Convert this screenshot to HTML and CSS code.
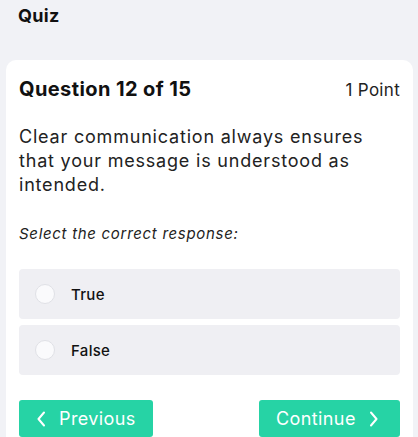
FILE: index.html
```html
<!DOCTYPE html>
<html lang="en">
<head>
    <meta charset="UTF-8">
    <meta name="viewport" content="width=device-width, initial-scale=1.0">
    <title>Quiz</title>
    <link rel="stylesheet" href="styles.css">
</head>
<body>
    <header class="top-bar">
        <h1>Quiz</h1>
    </header>
    <main class="card">
        <div class="card-head">
            <h2>Question 12 of 15</h2>
            <span class="points">1 Point</span>
        </div>
        <p class="question">Clear communication always ensures that your message is understood as intended.</p>
        <p class="hint">Select the correct response:</p>
        <div class="options">
            <label class="option">
                <input type="radio" name="answer" value="true">
                <span>True</span>
            </label>
            <label class="option">
                <input type="radio" name="answer" value="false">
                <span>False</span>
            </label>
        </div>
        <div class="actions">
            <button class="nav-button prev">
                <svg width="8" height="16" viewBox="0 0 8 16"><path d="M7 1.5 L1.5 8 L7 14.5" fill="none" stroke="#fff" stroke-width="2" stroke-linecap="round" stroke-linejoin="round"/></svg>
                Previous
            </button>
            <button class="nav-button next">
                Continue
                <svg width="8" height="16" viewBox="0 0 8 16"><path d="M1 1.5 L6.5 8 L1 14.5" fill="none" stroke="#fff" stroke-width="2" stroke-linecap="round" stroke-linejoin="round"/></svg>
            </button>
        </div>
    </main>
</body>
</html>
```

FILE: styles.css
```css
body {
    font-family: Inter, "Open Sans", sans-serif;
    background-color: #f1f2f6;
    margin: 0;
    color: #111;
}
.top-bar {
    padding: 4px 18px 0;
    height: 56px;
}
.top-bar h1 {
    margin: 0;
    font-size: 18px;
    font-weight: 700;
    line-height: 24px;
    letter-spacing: 0.3px;
}
.card {
    background-color: #fff;
    margin: 0 5px 0 6px;
    padding: 14px 13px 20px;
    border-radius: 10px;
}
.card-head {
    display: flex;
    justify-content: space-between;
    align-items: baseline;
}
.card-head h2 {
    margin: 0;
    font-size: 20px;
    font-weight: 700;
    line-height: 30px;
    letter-spacing: 0.4px;
}
.points {
    font-size: 17px;
    color: #222;
    letter-spacing: 0.3px;
}
.question {
    margin: 21px 0 0;
    font-size: 18px;
    line-height: 24px;
    letter-spacing: 0.8px;
    color: #222;
}
.hint {
    margin: 26px 0 0;
    font-size: 15px;
    font-style: italic;
    line-height: 22px;
    letter-spacing: 0.7px;
    color: #222;
}
.options {
    margin-top: 24px;
    display: flex;
    flex-direction: column;
    gap: 6px;
}
.option {
    display: flex;
    align-items: center;
    height: 50px;
    padding: 0 16px;
    background-color: #efeff3;
    border-radius: 4px;
    font-size: 15px;
    font-weight: 500;
    letter-spacing: 0.3px;
    cursor: pointer;
}
.option input {
    appearance: none;
    width: 20px;
    height: 20px;
    margin: 0 16px 0 0;
    border: 1px solid #e0e1e6;
    border-radius: 50%;
    background-color: #fafafc;
}
.actions {
    margin-top: 25px;
    display: flex;
    justify-content: space-between;
}
.nav-button {
    display: flex;
    align-items: center;
    gap: 14px;
    height: 37px;
    border: none;
    border-radius: 3px;
    background-color: #26d3a5;
    color: #fff;
    font-family: inherit;
    font-size: 18px;
    letter-spacing: 0.4px;
    cursor: pointer;
}
.prev {
    width: 134px;
    padding: 0 0 0 18px;
}
.next {
    width: 141px;
    padding: 0 0 0 17px;
}
```
